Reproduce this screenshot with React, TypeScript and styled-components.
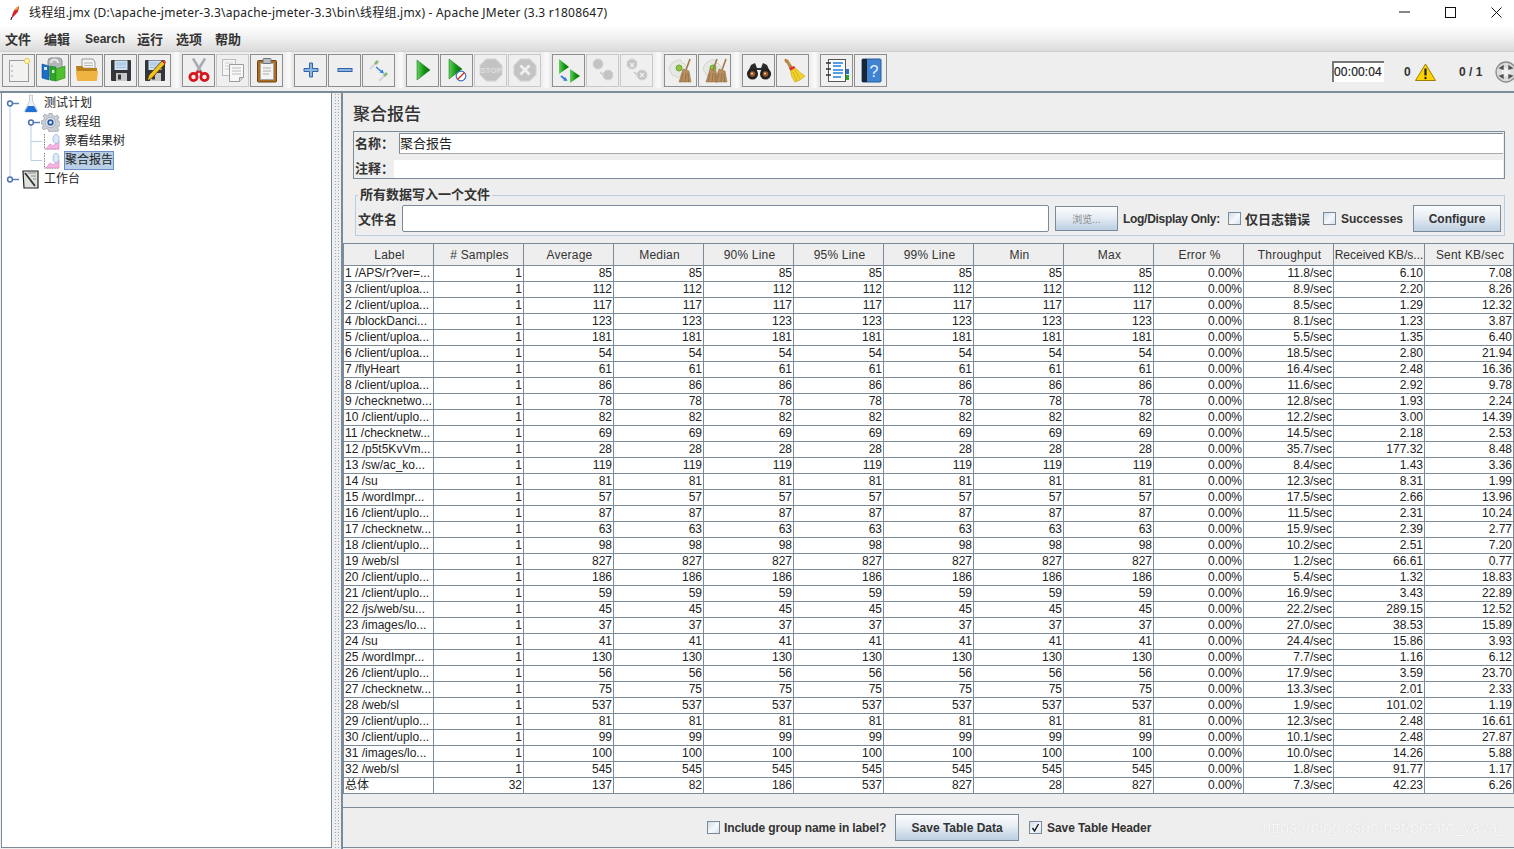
import React from "react";
import styled, { createGlobalStyle } from "styled-components";

const CJK = `"Liberation Sans", "Noto Sans CJK SC", sans-serif`;

const Global = createGlobalStyle`
  html, body { margin: 0; padding: 0; background: #eeeeee; overflow: hidden; }
  body { font-family: ${CJK}; color: #222; }
  * { box-sizing: border-box; }
`;

const Page = styled.div`
  width: 1514px; height: 849px; display: flex; flex-direction: column; overflow: hidden; background: #eee;
`;
const TitleBar = styled.div`
  height: 26px; background: #fff; display: flex; align-items: center; padding-left: 9px; flex: none;
`;
const TitleText = styled.span`
  font-family: "Noto Sans", "Noto Sans CJK SC", sans-serif; font-size: 12px; letter-spacing: 0.22px; margin-left: 8px; color: #222; white-space: nowrap; flex: 1; margin-top: -2px;
`;
const WinControls = styled.div`
  display: flex; align-items: center; flex: none; margin-top: -2px; gap: 35px; margin-right: 12px;
`;
const MenuBar = styled.div`
  height: 26px; flex: none; background: linear-gradient(#ffffff 0%, #f3f3f3 40%, #dcdcdc 100%); display: flex; align-items: center; padding-left: 5px; border-bottom: 1px solid #cfcfcf;
`;
const MenuItem = styled.span<{ $w: number; $latin?: boolean }>`
  width: ${p => p.$w}px; font-size: ${p => (p.$latin ? 12 : 13)}px; font-weight: bold; color: #333; white-space: nowrap;
`;
const Toolbar = styled.div`
  height: 39px; flex: none; background: #eeeeee; display: flex; align-items: center; padding: 0 0 3px 2px; overflow: hidden;
`;
const ToolBtn = styled.div<{ $off?: boolean }>`
  width: 33px; height: 33px; margin-right: 1px; flex: none; border: 1px solid ${p => (p.$off ? "#c8c8c8" : "#8e8e8e")}; display: flex; align-items: center; justify-content: center; background: #efefef;
  svg { display: block; }
`;
const Sep = styled.div`
  width: 10px; height: 36px; flex: none; background: linear-gradient(90deg, #eee 0%, #fbfbfb 50%, #e2e2e2 100%);
`;
const ToolRight = styled.div`
  margin: 3px 0 0 auto; display: flex; align-items: center; flex: none; font-size: 12px; font-weight: bold; color: #333; width: 182px; overflow: hidden;
`;
const Timer = styled.div`
  width: 52px; height: 21px; background: #fff; border-top: 2px solid #777; border-left: 2px solid #777; font-size: 12px; font-weight: normal; letter-spacing: 0.15px; line-height: 19px; color: #222; -webkit-text-stroke: 0.2px #222; text-align: left; flex: none;
`;
const Count = styled.span<{ $w: number; $ml: number }>`
  width: ${p => p.$w}px; margin-left: ${p => p.$ml}px; flex: none; white-space: nowrap;
`;
const Rule = styled.div`
  height: 2px; background: #7c8b99; flex: none;
`;
const Main = styled.div`
  flex: 1; display: flex; min-height: 0;
`;
const TreePane = styled.div`
  width: 331px; margin-left: 1px; margin-bottom: 1px; padding-top: 1px; flex: none; background: #fff; border-right: 1px solid #7c8b99; border-left: 1px solid #7c8b99; border-bottom: 1px solid #7c8b99;
`;
const TreeRow = styled.div`
  height: 19px; display: flex; align-items: center; font-size: 12px; color: #222; white-space: nowrap;
  svg { flex: none; display: block; }
`;
const TreeLabel = styled.span<{ $sel?: boolean }>`
  margin-left: ${p => (p.$sel ? 4 : 5)}px; padding: 0 ${p => (p.$sel ? 1 : 0)}px; height: 19px; line-height: 18px; background: ${p => (p.$sel ? "#b8cfe5" : "transparent")}; outline: ${p => (p.$sel ? "1px solid #6a8fc8" : "none")}; outline-offset: -1px;
`;
const Splitter = styled.div`
  width: 9px; flex: none; background-image: radial-gradient(circle, #9aa7b4 0.7px, transparent 0.9px); background-size: 3px 3px; background-position: 2px 0; background-clip: content-box; padding: 0 2px 0 1px;
`;
const Panel = styled.div`
  flex: 1; min-width: 0; border-left: 2px solid #7c8b99; display: flex; flex-direction: column; background: #eee;
`;
const PanelTitle = styled.div`
  height: 38px; padding-left: 10px; padding-top: 10px; font-size: 17px; line-height: 24px; color: #333; flex: none; font-weight: 500;
`;
const NameBox = styled.div`
  margin-left: 10px; width: 1152px; height: 48px; border: 1px solid #7c8b99; flex: none; padding: 1px 0 0 1px;
`;
const NameRow = styled.div`
  height: 27px; display: flex; align-items: flex-start;
`;
const CommentRow = styled.div`
  height: 18px; display: flex; align-items: center;
`;
const BoldLabel = styled.span<{ $w?: number; $ml?: number; $lh?: number }>`
  font-size: 13px; font-weight: bold; color: #333; white-space: nowrap; width: ${p => (p.$w ? p.$w + "px" : "auto")}; margin-left: ${p => p.$ml ?? 0}px; line-height: ${p => (p.$lh ? p.$lh + "px" : "normal")}; flex: none;
`;
const NameInput = styled.div`
  flex: 1; height: 21px; background: #fff; border-left: 1px solid #7c8b99; border-top: 1px solid #7c8b99; border-bottom: 1px solid #aaa; font-size: 13px; line-height: 19px; padding-left: 0; color: #222; margin-right: 1px;
`;
const CommentInput = styled.div`
  flex: 1; height: 18px; background: #fff; margin-right: 1px;
`;
const FileSet = styled.fieldset`
  margin: 8px 0 0 12px; padding: 0 0 0 2px; width: 1150px; height: 49px; border: 1px solid #b8cfe5; flex: none; min-width: 0;
`;
const Legend = styled.legend`
  padding: 0 2px; margin-left: 0; font-size: 13px; font-weight: bold; color: #333; line-height: 16px;
`;
const FileRow = styled.div`
  display: flex; align-items: center; height: 27px; margin-top: 2px;
`;
const FileInput = styled.div`
  width: 647px; height: 27px; margin-left: 5px; background: #fff; border: 1px solid #7c8b99; border-radius: 2px; flex: none;
`;
const JButton = styled.div<{ $w: number; $h: number; $ml: number; $dim?: boolean; $size?: number }>`
  width: ${p => p.$w}px; height: ${p => p.$h}px; margin-left: ${p => p.$ml}px; flex: none; border: 1px solid #7a8a99; background: linear-gradient(#fbfcfd 0%, #e6edf4 45%, #bccfe2 100%);
  display: flex; align-items: center; justify-content: center; font-size: ${p => p.$size ?? 12}px; font-weight: ${p => (p.$dim ? "normal" : "bold")}; color: ${p => (p.$dim ? "#8b8b8b" : "#333")}; white-space: nowrap;
`;
const Check = styled.div<{ $ml?: number }>`
  width: 13px; height: 13px; flex: none; margin-left: ${p => p.$ml ?? 0}px; border: 1px solid #7a8a99; background: linear-gradient(135deg, #cfdcea 0%, #f6f9fc 55%, #d6e2ee 100%); display: flex; align-items: center; justify-content: center;
`;
const SmallBold = styled.span<{ $ml: number; $ls?: number }>`
  font-size: 12px; font-weight: bold; color: #333; margin-left: ${p => p.$ml}px; letter-spacing: ${p => p.$ls ?? 0}px; white-space: nowrap; flex: none;
`;
const TableWrap = styled.div`
  margin: 7px 0 0 0; flex: none; border-left: 1px solid #7c8b99; border-top: 1px solid #7c8b99;
`;
const COLS = `repeat(11, 90px) 91px 89px`;
const HeadRow = styled.div`
  display: grid; grid-template-columns: ${COLS}; height: 22px; background: #eee;
`;
const HeadCell = styled.div<{ $tight?: boolean }>`
  border-right: 1px solid #7c8b99; border-bottom: 1px solid #7c8b99; font-size: 12px; letter-spacing: ${p => (p.$tight ? 0 : 0.2)}px; padding-left: ${p => (p.$tight ? 0 : 2)}px; color: #333; text-align: center; line-height: 22px; white-space: nowrap; overflow: hidden;
`;
const DataRow = styled.div`
  display: grid; grid-template-columns: ${COLS}; height: 16px; background: #fff;
`;
const Cell = styled.div<{ $left?: boolean }>`
  border-right: 1px solid #7c8b99; border-bottom: 1px solid #7c8b99; font-size: 12px; line-height: 15px; color: #222; text-align: ${p => (p.$left ? "left" : "right")}; padding: 0 1px; white-space: nowrap; overflow: hidden;
`;
const Spacer = styled.div`
  flex: 1;
`;
const BottomBar = styled.div`
  height: 41px; flex: none; margin-bottom: 1px; border-top: 1px solid #7c8b99; border-bottom: 1px solid #7c8b99; display: flex; align-items: center; padding-left: 364px; position: relative;
`;
const Watermark = styled.span`
  position: absolute; right: 8px; top: 11px; font-size: 16px; color: #f8f8f8; white-space: nowrap; font-family: "Liberation Sans", sans-serif; text-shadow: 0 0 1px #cfcfcf;
`;

/* ---------- icons ---------- */
const S = 26;
const Ic: React.FC<{ children: React.ReactNode; s?: number }> = ({ children, s = S }) => (
  <svg width={s} height={s} viewBox="0 0 26 26">{children}</svg>
);
const NewIc = () => (
  <Ic>
    <rect x="3.5" y="3.5" width="19" height="21" fill="#f2f2f0" stroke="#9a9a9a" />
    <circle cx="6" cy="9" r=".7" fill="#888" /><circle cx="6" cy="14" r=".7" fill="#888" /><circle cx="6" cy="19" r=".7" fill="#888" />
    <circle cx="21" cy="4" r="2.6" fill="#fff6b8" stroke="#e8c84a" />
  </Ic>
);
const CollIc = () => (
  <Ic>
    <rect x="8" y="1" width="14" height="18" rx="3" fill="#b3b7bb" stroke="#8a9097" />
    <path d="M11 6 a3 3 0 0 1 7 0" fill="none" stroke="#e8e8e8" strokeWidth="2" />
    <path d="M2 7 L9 9 L9 23 L2 21Z" fill="#1d6fc4" stroke="#13508f" strokeWidth=".6" />
    <rect x="4" y="10" width="3" height="3" fill="#cfe4f7" />
    <path d="M10 9 L16 10 L16 24 L10 23Z" fill="#2ba52b" stroke="#1f7d1f" strokeWidth=".6" />
    <path d="M16 12 L25 9 L25 21 L16 24Z" fill="#4fc02f" stroke="#2e8e1b" strokeWidth=".6" />
    <rect x="12" y="13" width="2.4" height="3" fill="#d2f0c9" />
  </Ic>
);
const OpenIc = () => (
  <Ic>
    <path d="M8 2 L19 2 L21 5 L21 14 L8 14Z" fill="#f4f4f4" stroke="#9a9a9a" />
    <path d="M10 6h9M10 8.5h9M10 11h9" stroke="#b4b4b4" />
    <path d="M2 9 L8 9 L10 11 L23 11 L23 22 Q23 24 21 24 L5 24 Q3 24 3 22Z" fill="#b8801c" />
    <path d="M2 14 L24 14 L23 22.5 Q23 24 21 24 L5 24 Q3 24 3 22.5Z" fill="#eeb340" />
  </Ic>
);
const Floppy: React.FC = () => (
  <>
    <rect x="3" y="3" width="20" height="21" rx="1" fill="#34363b" />
    <rect x="6.5" y="3.5" width="13" height="9.5" fill="#cfe1f3" />
    <path d="M8 6h10M8 8h10M8 10.5h10" stroke="#8db1d3" strokeWidth=".8" />
    <rect x="8" y="16" width="11" height="8" fill="#c9c9c9" />
    <rect x="10" y="17.5" width="3" height="5" fill="#34363b" />
  </>
);
const SaveIc = () => <Ic><Floppy /></Ic>;
const SaveAsIc = () => (
  <Ic>
    <Floppy />
    <path d="M5 24 L7 18 L20 4 L23 7 L10 21Z" fill="#f2c21d" stroke="#4a3505" strokeWidth=".8" />
    <path d="M20 4 L23 7 L24 5 L22 3Z" fill="#d8342a" />
  </Ic>
);
const CutIc = () => (
  <Ic>
    <path d="M7 1.5 L15.5 15.5 M19 1.5 L10.5 15.5" stroke="#a9adb1" strokeWidth="2.6" fill="none" />
    <circle cx="7.5" cy="20" r="3.6" fill="none" stroke="#d8151e" strokeWidth="2.8" />
    <circle cx="18.5" cy="20" r="3.6" fill="none" stroke="#d8151e" strokeWidth="2.8" />
    <path d="M10 17 L12.5 14 M16 17 L13.5 14" stroke="#d8151e" strokeWidth="2.4" />
  </Ic>
);
const CopyIc = () => (
  <Ic>
    <rect x="2.5" y="2.5" width="13" height="16" fill="#f5f5f5" stroke="#bbb" />
    <path d="M5 6h8M5 9h8M5 12h8" stroke="#d0d0d0" />
    <path d="M9.5 7.5h14v13l-4 4h-10Z" fill="#f7f7f7" stroke="#9c9c9c" />
    <path d="M12 11h9M12 14h9M12 17h9" stroke="#bbb" />
    <path d="M19.5 24.5v-4h4" fill="#d8d8d8" stroke="#9c9c9c" />
  </Ic>
);
const PasteIc = () => (
  <Ic>
    <rect x="3.5" y="3.5" width="19" height="21.5" rx="1" fill="#a96d24" stroke="#6d4410" />
    <rect x="6.5" y="6.5" width="13" height="16" fill="#f4f4f2" stroke="#aaa" />
    <path d="M9 11h8M9 14h8M9 17h6" stroke="#aaa" />
    <rect x="9" y="1.5" width="8" height="5" rx="1" fill="#b9bdc1" stroke="#6f7378" />
  </Ic>
);
const PlusIc = () => (
  <Ic><path d="M11.5 6h3v5.5H20v3h-5.5V20h-3v-5.5H6v-3h5.5Z" fill="#8db4de" stroke="#2f65a8" /></Ic>
);
const MinusIc = () => <Ic><rect x="6" y="11.5" width="14" height="3" fill="#8db4de" stroke="#2f65a8" /></Ic>;
const ToggleIc = () => (
  <Ic>
    <path d="M4 12 L10 6" stroke="#d6d6d6" strokeWidth="2.2" />
    <path d="M9 7 L12 4" stroke="#86b877" strokeWidth="2.8" />
    <path d="M13 24 L19 18" stroke="#d6d6d6" strokeWidth="2.2" />
    <path d="M18 19 L21 16" stroke="#86b877" strokeWidth="2.8" />
    <path d="M10 10 L16 15" stroke="#2f7fe0" strokeWidth="1.4" />
    <path d="M18 16.5 L13.5 15.5 L16.5 12.5Z" fill="#2f7fe0" />
  </Ic>
);
const Defs = () => (
  <defs>
    <linearGradient id="gr" x1="0" y1="0" x2="1" y2="0">
      <stop offset="0" stopColor="#5ed35e" /><stop offset=".55" stopColor="#149314" /><stop offset="1" stopColor="#0a6b0a" />
    </linearGradient>
  </defs>
);
const PlayIc = () => <Ic><Defs /><path d="M7 3 L20 13 L7 23Z" fill="url(#gr)" stroke="#0d6a0d" strokeWidth=".5" /></Ic>;
const PlayNoIc = () => (
  <Ic>
    <Defs />
    <path d="M5 2 L18 12 L5 22Z" fill="url(#gr)" stroke="#0d6a0d" strokeWidth=".5" />
    <circle cx="17" cy="19" r="4.8" fill="#fff" stroke="#3a6fc0" strokeWidth="1.2" />
    <path d="M13.5 22.5 L20.5 15.5" stroke="#d9332b" strokeWidth="1.5" />
  </Ic>
);
const Octagon: React.FC<{ r?: number; cx?: number; cy?: number }> = ({ r = 11, cx = 13, cy = 13 }) => {
  const a = r * 0.414;
  const d = `M${cx - a} ${cy - r} L${cx + a} ${cy - r} L${cx + r} ${cy - a} L${cx + r} ${cy + a} L${cx + a} ${cy + r} L${cx - a} ${cy + r} L${cx - r} ${cy + a} L${cx - r} ${cy - a}Z`;
  return <path d={d} fill="#c3c3c3" stroke="#d2d2d2" />;
};
const StopIc = () => (
  <Ic>
    <Octagon />
    <text x="13" y="16" textAnchor="middle" fontSize="8" fontWeight="bold" fill="#dedede" fontFamily="Liberation Sans">STOP</text>
  </Ic>
);
const XMark: React.FC<{ c: number; r: number; y?: number; w?: number }> = ({ c, r, y, w = 2.8 }) => {
  const yy = y ?? c;
  return <path d={`M${c - r} ${yy - r} L${c + r} ${yy + r} M${c + r} ${yy - r} L${c - r} ${yy + r}`} stroke="#efefef" strokeWidth={w} />;
};
const ShutIc = () => <Ic><Octagon /><XMark c={13} r={4.5} /></Ic>;
const RemoteStartIc = () => (
  <Ic>
    <Defs />
    <path d="M3 2 L13 10 L3 17Z" fill="url(#gr)" />
    <path d="M14 12 L24 19 L14 26Z" fill="url(#gr)" />
    <path d="M5 19 L10 23" stroke="#3d7fd0" strokeWidth="2" />
    <path d="M11.5 24 L7 23.5 L9.5 20Z" fill="#3d7fd0" />
  </Ic>
);
const RemoteStopIc = () => (
  <Ic>
    <Octagon r={4.8} cx={8} cy={7} />
    <Octagon r={4.8} cx={18} cy={18} />
    <path d="M10 15 L13 18" stroke="#c8c8c8" strokeWidth="1.4" />
  </Ic>
);
const RemoteShutIc = () => (
  <Ic>
    <Octagon r={4.8} cx={8} cy={7} />
    <XMark c={8} r={2} w={1.4} />
    <Octagon r={4.8} cx={18} cy={18} />
    <XMark c={18} r={2} w={1.4} />
    <path d="M10 15 L13 18" stroke="#c8c8c8" strokeWidth="1.4" />
  </Ic>
);
const Gear: React.FC = () => (
  <>
    <path d="M9 3h4l1 3 3 1 2 3-2 3 1 3-3 2-3 1-2 2-3-2-3-1-1-3-2-2 1-4 2-3Z" fill="#e6e8e3" stroke="#d3d6d0" />
    <circle cx="11" cy="11" r="3" fill="#8ec643" stroke="#6fa52c" />
  </>
);
const Broom: React.FC<{ x?: number }> = ({ x = 0 }) => (
  <g transform={`translate(${x} 0)`}>
    <path d="M22 2 L18 13" stroke="#a17a4b" strokeWidth="1.6" />
    <path d="M15 12 L21 14 L23 25 L11 25Z" fill="#b88e5e" stroke="#8d6a41" strokeWidth=".5" />
    <path d="M15 16 L13 25 M18 16 L17 25 M20 16 L20.5 25" stroke="#8d6a41" strokeWidth=".7" />
  </g>
);
const ClearIc = () => <Ic><Gear /><Broom /></Ic>;
const ClearAllIc = () => <Ic><Gear /><Broom x={-7} /><Broom x={2} /></Ic>;
const BinocIc = () => (
  <Ic>
    <path d="M5 8 L9 6 L11 11 L15 11 L17 6 L21 8 L25 17 L15 17 L15 13 L11 13 L11 17 L1 17Z" fill="#2a2a2a" />
    <circle cx="6.5" cy="17" r="5.5" fill="#222" /><circle cx="19.5" cy="17" r="5.5" fill="#222" />
    <circle cx="6.5" cy="17" r="2.8" fill="#a0561f" /><circle cx="19.5" cy="17" r="2.8" fill="#a0561f" />
    <circle cx="6" cy="16.5" r="1" fill="#ddd" /><circle cx="19" cy="16.5" r="1" fill="#ddd" />
  </Ic>
);
const YBroomIc = () => (
  <Ic>
    <path d="M5 2 Q9 3 9 5 L13 11 L10 12 L7 6 Q4 5 5 2Z" fill="#c58a3a" stroke="#916226" strokeWidth=".5" />
    <path d="M9 11 L14 9 L15.5 11 L10.5 14Z" fill="#d33" />
    <path d="M10.5 14 L15.5 11 Q20 16 25 19 Q20 24 15 25 Q11 20 10.5 14Z" fill="#f1d22c" stroke="#c6a513" strokeWidth=".6" />
    <path d="M13 15 L17 24 M15 13 L20 22" stroke="#c6a513" strokeWidth=".7" />
  </Ic>
);
const NotesIc = () => (
  <Ic>
    <rect x="4.5" y="2.5" width="17" height="22" fill="#fbfbfb" stroke="#555" />
    <path d="M2 6h5M2 12h5M2 18h5" stroke="#333" strokeWidth="1.6" />
    <path d="M9 6h10M9 9h8M9 13h10M9 16h10M9 20h8" stroke="#1f7fe0" strokeWidth="1.4" />
    <rect x="22" y="12" width="3" height="5" fill="#2a6fd0" /><rect x="22" y="18" width="3" height="5" fill="#2ca52c" />
  </Ic>
);
const HelpIc = () => (
  <Ic>
    <rect x="4" y="2" width="19" height="23" rx="1" fill="#3f84d2" stroke="#2a5c99" />
    <rect x="4" y="2" width="5" height="23" fill="#1b2531" />
    <text x="16" y="20" textAnchor="middle" fontSize="16" fill="#e6f0fb" fontFamily="Liberation Sans">?</text>
  </Ic>
);
const Feather = () => (
  <svg width="12" height="16" viewBox="0 0 12 16">
    <path d="M2 15 L3.5 9 Q5 4 10 1 Q10 6 7 9 L4 12Z" fill="#d2232e" />
    <path d="M5 5 Q7 2 10 1 Q9.5 3 8 5Z" fill="#f0a431" />
    <path d="M2 15 L2.6 12" stroke="#3a2a6e" strokeWidth="1.2" />
  </svg>
);
const Flask = () => (
  <svg width="16" height="19" viewBox="0 0 16 19">
    <path d="M6.5 1h3v6l5 10q0 1-1 1H2.5q-1 0-1-1l5-10Z" fill="#eef2f6" stroke="#b4bdc6" strokeWidth=".7" />
    <path d="M5 12h6l3 5q0 1-1 1H3q-1 0-1-1Z" fill="#1f70d4" />
  </svg>
);
const GearIcon = () => (
  <svg width="19" height="19" viewBox="0 0 19 19">
    <path d="M8 0h3l.6 2.5 2.3 1 2.2-1.4 2 2-1.3 2.3.9 2.2 2.3.6v3l-2.4.6-1 2.3 1.4 2.1-2.1 2.1-2.2-1.4-2.2 1L11 19H8l-.6-2.5-2.3-1-2.2 1.4-2-2 1.4-2.2-1-2.2L0 11V8l2.4-.6 1-2.3L2 3l2.1-2 2.2 1.4 2.1-1Z" fill="#c9ced4" stroke="#8c949c" strokeWidth=".6" />
    <circle cx="9.5" cy="9.5" r="5" fill="#e9edf1" stroke="#8c949c" strokeWidth=".6" />
    <circle cx="9.5" cy="9.5" r="3.2" fill="#2f5da8" />
    <circle cx="9.5" cy="9.5" r="1.4" fill="#dbe6f5" />
  </svg>
);
const ChartIcon = () => (
  <svg width="17" height="17" viewBox="0 0 17 17">
    <path d="M1.5 1v15h15" fill="none" stroke="#888" strokeDasharray="1.5 1" />
    <path d="M3 16 L7 11 L10 13 L16 8 V16Z" fill="#f5b4e0" stroke="#d978bf" strokeWidth=".6" />
    <ellipse cx="13" cy="6" rx="3" ry="4.5" fill="#dbe8f7" stroke="#8fb0d6" strokeWidth=".7" />
  </svg>
);
const WorkbenchIcon = () => (
  <svg width="17" height="19" viewBox="0 0 17 19">
    <path d="M1 1h15v17H2Z" fill="#dfe3dd" stroke="#222" strokeWidth="1.2" />
    <path d="M3 3 L13 16" stroke="#333" strokeWidth="1.8" />
    <path d="M6 3h8M9 6h5M11 9h3" stroke="#8a8a8a" />
  </svg>
);
const Guide: React.FC<{ w: number; d: string; hx?: number }> = ({ w, d, hx }) => (
  <svg width={w} height={19} viewBox={`0 0 ${w} 19`}>
    <path d={d} stroke="#b8cfe5" fill="none" />
    {hx !== undefined && (
      <>
        <path d={`M${hx} 9.5h9`} stroke="#5d80b8" strokeWidth="1.5" />
        <circle cx={hx} cy={9.5} r={2.4} fill="#fff" stroke="#4a72b5" strokeWidth="1.5" />
      </>
    )}
  </svg>
);
const MinIc = () => <svg width="11" height="2" viewBox="0 0 11 2"><path d="M0 1h11" stroke="#111" /></svg>;
const MaxIc = () => <svg width="11" height="11" viewBox="0 0 11 11"><rect x=".5" y=".5" width="10" height="10" fill="none" stroke="#111" /></svg>;
const CloseIc = () => <svg width="11" height="11" viewBox="0 0 11 11"><path d="M.5.5l10 10M10.5.5l-10 10" stroke="#111" /></svg>;
const WarnIc = () => (
  <svg width="21" height="18" viewBox="0 0 21 18" style={{ flex: "none" }}>
    <path d="M10.5 1 L20.5 17.5 H.5Z" fill="#fdd200" stroke="#9c7f00" />
    <path d="M10.5 5.5v7" stroke="#222" strokeWidth="2.2" />
    <circle cx="10.5" cy="15" r="1.2" fill="#222" />
  </svg>
);
const GlobeIc = () => (
  <svg width="22" height="22" viewBox="0 0 22 22" style={{ flex: "none" }}>
    <circle cx="11" cy="11" r="10" fill="#dcdcdc" stroke="#8c8c8c" strokeWidth="1.3" />
    <circle cx="11" cy="11" r="4.5" fill="#eee" />
    <path d="M5 7 L8 5 L8 8Z M17 7 L14 5 L14 8Z M5 15 L8 17 L8 14Z M17 15 L14 17 L14 14Z" fill="#555" stroke="#555" strokeWidth="1.4" />
  </svg>
);
const Tick = () => (
  <svg width="9" height="9" viewBox="0 0 9 9"><path d="M1.5 5 L3.5 8 L7.5 1" fill="none" stroke="#222" strokeWidth="1.5" /></svg>
);

/* ---------- data ---------- */
const heads = ["Label", "# Samples", "Average", "Median", "90% Line", "95% Line", "99% Line", "Min", "Max", "Error %", "Throughput", "Received KB/s...", "Sent KB/sec"];
const raw: [string, number, string, string, string][] = [
  ["1 /APS/r?ver=...", 85, "11.8", "6.10", "7.08"],
  ["3 /client/uploa...", 112, "8.9", "2.20", "8.26"],
  ["2 /client/uploa...", 117, "8.5", "1.29", "12.32"],
  ["4 /blockDanci...", 123, "8.1", "1.23", "3.87"],
  ["5 /client/uploa...", 181, "5.5", "1.35", "6.40"],
  ["6 /client/uploa...", 54, "18.5", "2.80", "21.94"],
  ["7 /flyHeart", 61, "16.4", "2.48", "16.36"],
  ["8 /client/uploa...", 86, "11.6", "2.92", "9.78"],
  ["9 /checknetwo...", 78, "12.8", "1.93", "2.24"],
  ["10 /client/uplo...", 82, "12.2", "3.00", "14.39"],
  ["11 /checknetw...", 69, "14.5", "2.18", "2.53"],
  ["12 /p5t5KvVm...", 28, "35.7", "177.32", "8.48"],
  ["13 /sw/ac_ko...", 119, "8.4", "1.43", "3.36"],
  ["14 /su", 81, "12.3", "8.31", "1.99"],
  ["15 /wordImpr...", 57, "17.5", "2.66", "13.96"],
  ["16 /client/uplo...", 87, "11.5", "2.31", "10.24"],
  ["17 /checknetw...", 63, "15.9", "2.39", "2.77"],
  ["18 /client/uplo...", 98, "10.2", "2.51", "7.20"],
  ["19 /web/sl", 827, "1.2", "66.61", "0.77"],
  ["20 /client/uplo...", 186, "5.4", "1.32", "18.83"],
  ["21 /client/uplo...", 59, "16.9", "3.43", "22.89"],
  ["22 /js/web/su...", 45, "22.2", "289.15", "12.52"],
  ["23 /images/lo...", 37, "27.0", "38.53", "15.89"],
  ["24 /su", 41, "24.4", "15.86", "3.93"],
  ["25 /wordImpr...", 130, "7.7", "1.16", "6.12"],
  ["26 /client/uplo...", 56, "17.9", "3.59", "23.70"],
  ["27 /checknetw...", 75, "13.3", "2.01", "2.33"],
  ["28 /web/sl", 537, "1.9", "101.02", "1.19"],
  ["29 /client/uplo...", 81, "12.3", "2.48", "16.61"],
  ["30 /client/uplo...", 99, "10.1", "2.48", "27.87"],
  ["31 /images/lo...", 100, "10.0", "14.26", "5.88"],
  ["32 /web/sl", 545, "1.8", "91.77", "1.17"],
];
const rows: string[][] = raw.map(([l, v, t, r, s]) => [l, "1", ...Array(7).fill(String(v)), "0.00%", `${t}/sec`, r, s]);
rows.push(["总体", "32", "137", "82", "186", "537", "827", "28", "827", "0.00%", "7.3/sec", "42.23", "6.26"]);

const menus: [string, number, boolean?][] = [["文件", 39], ["编辑", 41], ["Search", 52, true], ["运行", 39], ["选项", 39], ["帮助", 30]];

type Tool = { I: React.FC; off?: boolean } | "sep";
const tools: Tool[] = [
  { I: NewIc }, { I: CollIc }, { I: OpenIc }, { I: SaveIc }, { I: SaveAsIc }, "sep",
  { I: CutIc }, { I: CopyIc, off: true }, { I: PasteIc }, "sep",
  { I: PlusIc }, { I: MinusIc }, { I: ToggleIc }, "sep",
  { I: PlayIc }, { I: PlayNoIc }, { I: StopIc, off: true }, { I: ShutIc, off: true }, "sep",
  { I: RemoteStartIc }, { I: RemoteStopIc, off: true }, { I: RemoteShutIc, off: true }, "sep",
  { I: ClearIc }, { I: ClearAllIc }, "sep",
  { I: BinocIc }, { I: YBroomIc }, "sep",
  { I: NotesIc }, { I: HelpIc },
];

export default function App() {
  return (
    <Page>
      <Global />
      <TitleBar>
        <Feather />
        <TitleText>线程组.jmx (D:\apache-jmeter-3.3\apache-jmeter-3.3\bin\线程组.jmx) - Apache JMeter (3.3 r1808647)</TitleText>
        <WinControls><MinIc /><MaxIc /><CloseIc /></WinControls>
      </TitleBar>
      <MenuBar>
        {menus.map(([m, w, latin]) => <MenuItem key={m} $w={w} $latin={latin}>{m}</MenuItem>)}
      </MenuBar>
      <Toolbar>
        {tools.map((t, i) =>
          t === "sep" ? <Sep key={i} /> : <ToolBtn key={i} $off={t.off}><t.I /></ToolBtn>
        )}
        <ToolRight>
          <Timer>00:00:04</Timer>
          <Count $w={11} $ml={20}>0</Count>
          <WarnIc />
          <Count $w={36} $ml={23}>0 / 1</Count>
          <GlobeIc />
        </ToolRight>
      </Toolbar>
      <Rule />
      <Main>
        <TreePane>
          <TreeRow><Guide w={21} d="M8 10V19" hx={8} /><Flask /><TreeLabel>测试计划</TreeLabel></TreeRow>
          <TreeRow><Guide w={39} d="M8 0V19 M29 10V19" hx={29} /><GearIcon /><TreeLabel>线程组</TreeLabel></TreeRow>
          <TreeRow><Guide w={41} d="M8 0V19 M29 0V19 M29 9.5H40" /><ChartIcon /><TreeLabel>察看结果树</TreeLabel></TreeRow>
          <TreeRow><Guide w={41} d="M8 0V19 M29 0V9.5H40" /><ChartIcon /><TreeLabel $sel>聚合报告</TreeLabel></TreeRow>
          <TreeRow><Guide w={20} d="M8 0V9" hx={8} /><WorkbenchIcon /><TreeLabel>工作台</TreeLabel></TreeRow>
        </TreePane>
        <Splitter />
        <Panel>
          <PanelTitle>聚合报告</PanelTitle>
          <NameBox>
            <NameRow>
              <BoldLabel $w={44} $lh={22}>名称：</BoldLabel>
              <NameInput>聚合报告</NameInput>
            </NameRow>
            <CommentRow>
              <BoldLabel $w={39} $lh={16}>注释：</BoldLabel>
              <CommentInput />
            </CommentRow>
          </NameBox>
          <FileSet>
            <Legend>所有数据写入一个文件</Legend>
            <FileRow>
              <BoldLabel>文件名</BoldLabel>
              <FileInput />
              <JButton $w={63} $h={25} $ml={6} $dim $size={10}>浏览...</JButton>
              <SmallBold $ml={5} $ls={-0.3}>Log/Display Only:</SmallBold>
              <Check $ml={8} />
              <BoldLabel $ml={4}>仅日志错误</BoldLabel>
              <Check $ml={13} />
              <SmallBold $ml={5}>Successes</SmallBold>
              <JButton $w={88} $h={27} $ml={10}>Configure</JButton>
            </FileRow>
          </FileSet>
          <TableWrap>
            <HeadRow>{heads.map(h => <HeadCell key={h} $tight={h.startsWith("Received")}>{h}</HeadCell>)}</HeadRow>
            {rows.map((r, i) => (
              <DataRow key={i}>
                {r.map((c, j) => <Cell key={j} $left={j === 0}>{c}</Cell>)}
              </DataRow>
            ))}
          </TableWrap>
          <Spacer />
          <BottomBar>
            <Check />
            <SmallBold $ml={4} $ls={-0.14}>Include group name in label?</SmallBold>
            <JButton $w={124} $h={27} $ml={9}>Save Table Data</JButton>
            <Check $ml={10}><Tick /></Check>
            <SmallBold $ml={5} $ls={-0.1}>Save Table Header</SmallBold>
            <Watermark>https://blog.csdn.net/potato_yaya_</Watermark>
          </BottomBar>
        </Panel>
      </Main>
    </Page>
  );
}
